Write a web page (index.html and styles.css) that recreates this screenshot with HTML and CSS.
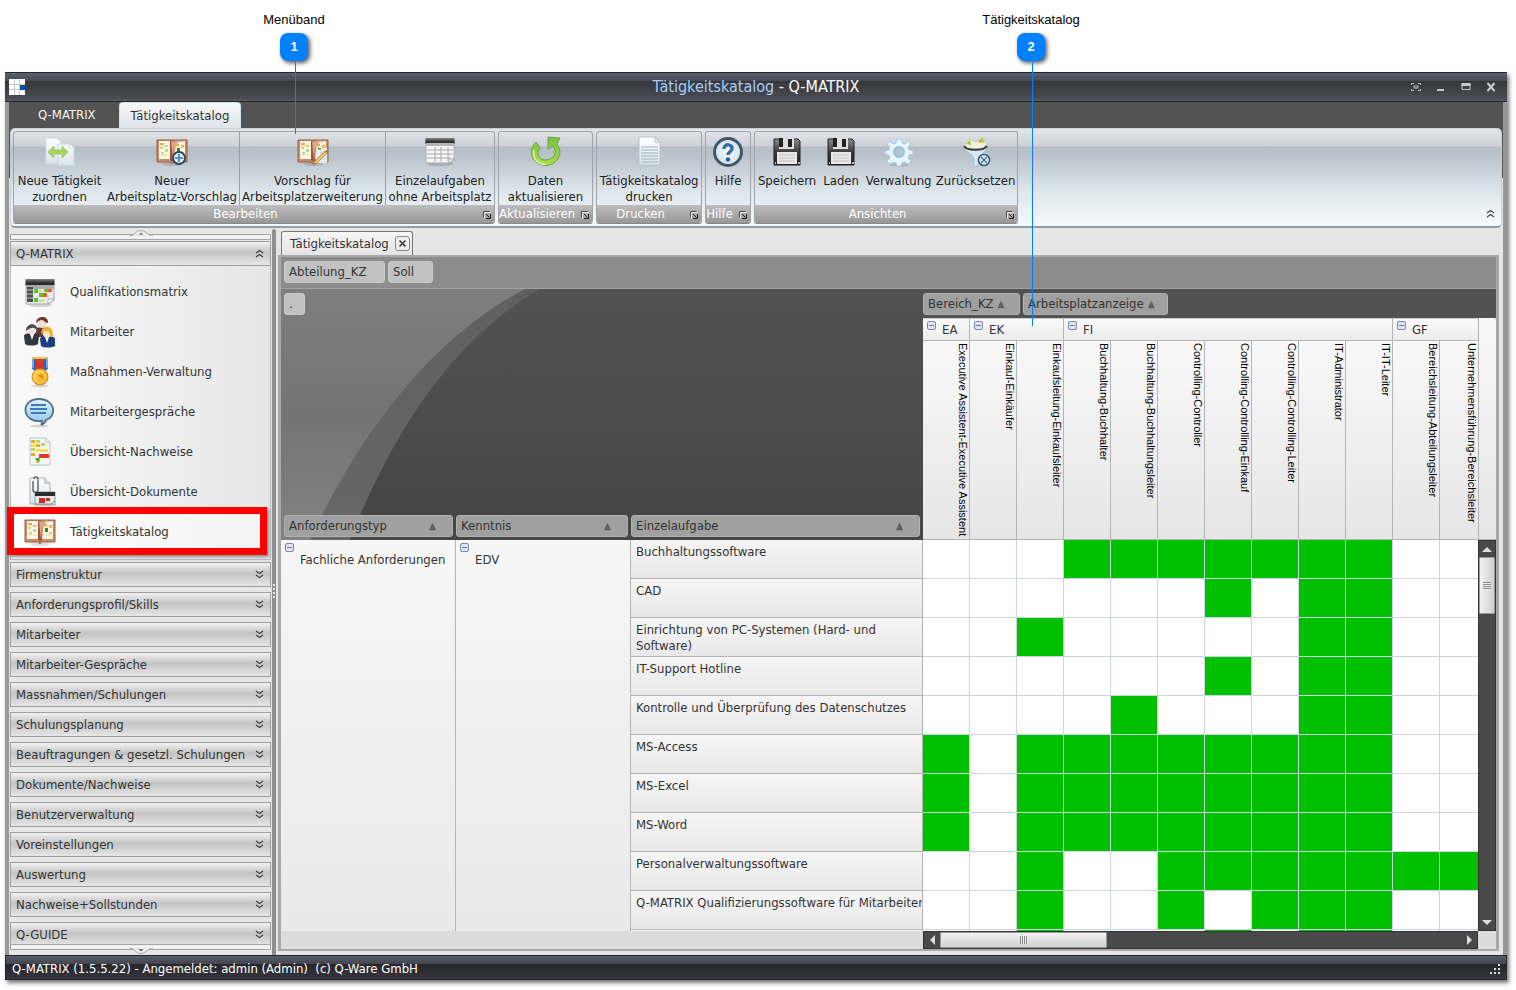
FILE: index.html
```html
<!DOCTYPE html>
<html lang="de">
<head>
<meta charset="utf-8">
<title>Tätigkeitskatalog - Q-MATRIX</title>
<link rel="stylesheet" href="styles.css">
</head>
<body>
<svg class="defs" width="0" height="0" aria-hidden="true">
  <defs>
    <linearGradient id="gDark" x1="0" y1="0" x2="0" y2="1"><stop offset="0" stop-color="#8a8a8a"/><stop offset=".5" stop-color="#3c3c3c"/><stop offset="1" stop-color="#222"/></linearGradient>
    <linearGradient id="gPaper" x1="0" y1="0" x2="0" y2="1"><stop offset="0" stop-color="#fff"/><stop offset="1" stop-color="#d7e3ea"/></linearGradient>
    <linearGradient id="gGreen" x1="0" y1="0" x2="0" y2="1"><stop offset="0" stop-color="#7cc142"/><stop offset="1" stop-color="#a9dc4a"/></linearGradient>
    <linearGradient id="gGold" x1="0" y1="0" x2="1" y2="1"><stop offset="0" stop-color="#ffdf5c"/><stop offset="1" stop-color="#ee9a12"/></linearGradient>
    <linearGradient id="gBubble" x1="0" y1="0" x2="0" y2="1"><stop offset="0" stop-color="#e4f3fb"/><stop offset="1" stop-color="#8cc4ea"/></linearGradient>
    <linearGradient id="gArc" x1="0" y1="0" x2="0" y2="1"><stop offset="0" stop-color="#7e7e7e"/><stop offset=".5" stop-color="#747474"/><stop offset="1" stop-color="#828282"/></linearGradient>
    <linearGradient id="gBand" x1="0" y1="0" x2="0" y2="1"><stop offset="0" stop-color="#606060"/><stop offset="1" stop-color="#676767"/></linearGradient>
    <radialGradient id="gHelp"><stop offset="0" stop-color="#fff"/><stop offset="1" stop-color="#cfdde6"/></radialGradient>

    <symbol id="book" viewBox="0 0 32 32">
      <ellipse cx="16" cy="28" rx="10" ry="2" fill="#000" opacity=".12"/>
      <path d="M1 4h30v22H18l-2 2-2-2H1z" fill="#c98c69" stroke="#9a6142"/>
      <path d="M3 5h11v18H3z" fill="#fbf8e6"/><path d="M18 23l2-17 9-1v18z" fill="#fbf4dc"/>
      <path d="M14 5l4 1v18l-2 2-2-2z" fill="#9b5536"/><path d="M15 6l9-2-6 8-1 12z" fill="#d8a88a"/>
      <path d="M4 7h4v2H4zM9 9h3v2H9zM20 8h3v2h-3z" fill="#e9a64a"/>
      <path d="M4 11h3v2H4zM9 13h3v3H9zM5 16h3v2H5zM21 13h3v3h-3zM25 16h3v2h-3z" fill="#c3d890"/>
      <path d="M21 12h3v4h-3z" fill="#2f8a2a"/><path d="M25 9h3v3h-3z" fill="#e9a64a"/>
      <path d="M3 19h10M20 19h9M3 10h10M20 11h9" stroke="#e4dcae"/>
    </symbol>
    <symbol id="bookAdd" viewBox="0 0 32 32"><use href="#book" width="32" height="32"/>
      <circle cx="23" cy="22" r="6" fill="#e8f1f7" stroke="#2c4a60" stroke-width="2"/><path d="M23 18v8M19 22h8" stroke="#5b8fc4" stroke-width="2"/></symbol>
    <symbol id="bookEdit" viewBox="0 0 32 32"><use href="#book" width="32" height="32"/>
      <path d="M20 14l10-2v15H19z" fill="#eef3f6" stroke="#c0cbd2" stroke-width=".5"/><path d="M21 17h8M21 20h8M21 23h8M24 14v12M27 14v12" stroke="#c5d2dc" stroke-width=".7"/>
      <path d="M17 29l1-4 10-10 2 2-10 10z" fill="#f4c25c" stroke="#a8763a" stroke-width=".7"/><path d="M28 15l2-1 1 1-1 2z" fill="#e05a3a"/></symbol>
    <symbol id="assign" viewBox="0 0 32 32">
      <path d="M2 2h11l4 4v22H2z" fill="url(#gPaper)" stroke="#cddbe3"/><path d="M14 8h11l5 4v18H14z" fill="url(#gPaper)" stroke="#c3d6e0"/>
      <path d="M25 8v4h5" fill="#fff" stroke="#b9cdd8" stroke-width=".7"/>
      <path d="M4 16l6-6v4h8v-4l6 6-6 6v-4h-8v4z" fill="#a6d65e" stroke="#8cc152" stroke-width=".7"/></symbol>
    <symbol id="tasks" viewBox="0 0 32 32">
      <ellipse cx="16" cy="28" rx="13" ry="2" fill="#000" opacity=".14"/>
      <path d="M2 3h28v21l-4 3H2z" fill="#f6f6f6" stroke="#b0b0b0"/><path d="M1.500 2h29v6h-29z" fill="url(#gDark)"/><path d="M2 7h28v3H2z" fill="#b5b5b5"/>
      <path d="M3 14h26M3 18h26M3 22h24M11 11v15M17 11v15M24 11v14" stroke="#aaa"/><path d="M25 27v-4h5z" fill="#fff" stroke="#999" stroke-width=".7"/></symbol>
    <symbol id="refresh" viewBox="0 0 32 32">
      <path d="M6 6C0 12 0 20 5 25c6 6 16 6 21 0 5-5 5-12 1-17l3-6-12-1 0 12 5-3c4 4 3 13-7 14C8 24 6 17 10 12z" fill="url(#gGreen)" stroke="#5e9a32" stroke-width=".8"/>
      <path d="M4 14c-2 9 5 15 12 14" stroke="#e0f5b0" stroke-width="1.500" fill="none"/></symbol>
    <symbol id="doc" viewBox="0 0 32 32">
      <path d="M6 1h16l5 5v23H6z" fill="url(#gPaper)" stroke="#b9c2c8"/><path d="M22 1v5h5z" fill="#eee" stroke="#a8a8a8" stroke-width=".7"/>
      <path d="M8 11h17M8 14h17M8 17h17M8 20h17M8 23h17M8 26h17" stroke="#9fb0bc"/></symbol>
    <symbol id="help" viewBox="0 0 32 32">
      <circle cx="16" cy="16" r="13.500" fill="url(#gHelp)" stroke="#41586a" stroke-width="3"/>
      <path d="M12 13c0-6 9-5 8 0-1 3-4 3-4 6" fill="none" stroke="#3470a8" stroke-width="3.500"/><circle cx="16" cy="23.500" r="2.200" fill="#2d5f96"/></symbol>
    <symbol id="disk" viewBox="0 0 32 32">
      <path d="M3 3h24l2 2v24H3z" fill="url(#gDark)" stroke="#222"/><path d="M8 2h15v11H8z" fill="#dedede"/><path d="M8 2h4v9H8zM17 3h4v8h-4z" fill="#222"/>
      <path d="M6 16h20v12H6z" fill="#e8e8e8"/><path d="M8 19h16M8 22h16M8 25h16" stroke="#c2c2c2"/><path d="M4 27h1M27 27h2" stroke="#bbb" stroke-width="2"/></symbol>
    <symbol id="gear" viewBox="0 0 32 32">
      <ellipse cx="16" cy="29" rx="10" ry="1.500" fill="#000" opacity=".12"/>
      <path d="M14 3h4l1 4 3 1 3-3 3 3-3 3 1 3 4 1v3l-4 1-1 3 3 3-3 3-3-2-3 1-1 3h-4l-1-3-3-1-3 2-3-3 3-3-1-3-4-1v-3l4-1 1-3-3-3 3-3 3 3 3-1z" fill="#e9f5fd" stroke="#a3cbe6"/>
      <circle cx="16" cy="16" r="5" fill="#b8c4cf" stroke="#8fc2e4" stroke-width="2"/></symbol>
    <symbol id="funnel" viewBox="0 0 32 32">
      <path d="M4 9l5-6 7 3 6-5 5 7-5 5H8z" fill="#f0f2dc" stroke="#b8c79a" stroke-width=".7"/><path d="M6 8l4-4 1 5zM18 5l4-3 3 5z" fill="#9bc63e"/><path d="M18 6l3-2v3z" fill="#f0a030"/>
      <path d="M4 11c3 4 19 4 23 0-2 7-8 8-9 13v6l-4 1V22C13 18 6 17 4 11z" fill="#d5e9f3" stroke="#8fb4ca" stroke-width=".7"/>
      <path d="M4 10c3 5 20 5 23 0" stroke="#3a3f42" stroke-width="2" fill="none"/>
      <circle cx="24" cy="24" r="5.500" fill="#e9f1f7" stroke="#3a5a78" stroke-width="1.600"/><path d="M21 21l6 6M27 21l-6 6" stroke="#3f76b5" stroke-width="1.500"/></symbol>
    <symbol id="qmatrix" viewBox="0 0 32 32">
      <ellipse cx="16" cy="29" rx="12" ry="2" fill="#000" opacity=".14"/>
      <path d="M2 4h28v20l-5 4H2z" fill="#ececec" stroke="#aaa"/><path d="M1.500 3h29v6h-29z" fill="url(#gDark)"/><path d="M2 9h28v4H2z" fill="#aaa"/>
      <path d="M3 11h6v15H3z" fill="#4c5050"/><path d="M3 14h6M3 18h6M3 22h6" stroke="#c0c0c0"/>
      <path d="M10 13h4v4h-4zM15 17h5v4h-5zM10 22h4v4h-4zM20 13h4v3h-4z" fill="#5fbf35"/><path d="M19 17h4v4h-4zM24 13h4v3h-4z" fill="#f05a28"/><path d="M14 14h4v3h-4zM15 23h6v3h-6z" fill="#c7e8a8"/>
      <path d="M24 28v-5h6z" fill="#fff" stroke="#999" stroke-width=".7"/></symbol>
    <symbol id="people" viewBox="0 0 32 32">
      <path d="M11 15c0-5 12-5 15 0v6H11z" fill="#603a34"/><circle cx="18" cy="7" r="5" fill="#f2dfcf"/><path d="M12 7c0-8 13-8 12 0-3 0-4-3-6-3s-4 1-6 3z" fill="#6b3a30"/>
      <path d="M0 20c0-4 15-4 15 0l-1 8c-3 2-10 2-13 0z" fill="#33373b"/><circle cx="8" cy="14" r="4.500" fill="#efe3da"/><path d="M2 15c0-9 12-9 12 0-2-1-3-4-6-3-3 0-4 2-6 3z" fill="#4d4d4d"/><path d="M6 18l2 6 2-6z" fill="#fff"/>
      <path d="M16 23c0-4 15-4 15 0v7c-4 2-11 2-14 0z" fill="#173f7d"/><circle cx="23" cy="17" r="4.500" fill="#f8e2bd"/><path d="M17 18c0-10 13-10 12 2l-3 1c1-4-1-6-4-6-2 0-4 1-5 3z" fill="#eead3b"/><path d="M21 21l2 6 2-6z" fill="#fff"/></symbol>
    <symbol id="medal" viewBox="0 0 32 32">
      <ellipse cx="16" cy="30" rx="9" ry="1.500" fill="#000" opacity=".14"/>
      <path d="M8 1h16v12l-8 5-8-5z" fill="#2f64b4"/><path d="M12 1h8v14h-8z" fill="#d33a2c"/><path d="M8 1h16v2H8z" fill="#e8c350"/>
      <path d="M8 3h2v10l-2-2zM22 3h2v8l-2 2z" fill="#7aa8dc"/><path d="M12 13h8l1 3H11z" fill="#f3bd30"/>
      <circle cx="16" cy="21" r="8" fill="url(#gGold)" stroke="#d88b14"/><circle cx="16" cy="21" r="5.500" fill="none" stroke="#fbe27d"/><path d="M12 18l8 6-2-6-3 1z" fill="#e08d18"/></symbol>
    <symbol id="talk" viewBox="0 0 32 32">
      <ellipse cx="15" cy="30" rx="10" ry="1.500" fill="#000" opacity=".14"/>
      <path d="M15 3c17 0 18 18 7 21-1 3-2 4-5 5 1-1 1-3 1-4C-3 27-4 3 15 3z" fill="url(#gBubble)" stroke="#4d6f88" stroke-width="1.800"/>
      <path d="M7 9h15M6 13h17M7 17h15" stroke="#3f78b6" stroke-width="1.800"/></symbol>
    <symbol id="proof" viewBox="0 0 32 32">
      <path d="M6 2h16l4 4v23H6z" fill="#f4f7f3" stroke="#b9c5ca"/><path d="M7 4h4v3H7zM12 8h4v3h-4zM7 17h4v3H7z" fill="#f6a623"/>
      <path d="M12 4h4v3h-4zM17 7h4v3h-4zM7 12h4v3H7zM12 23h4v4h-4z" fill="#b7d96a"/><path d="M7 8h4v3H7zM12 13h12v3H12z" fill="#f5dd60"/><path d="M15 18h10v4H15z" fill="#e23a25"/><path d="M11 22l3 4 2-4z" fill="#4b9a2c"/><path d="M22 2v4h4" fill="#fff" stroke="#a7b5ba"/></symbol>
    <symbol id="docs" viewBox="0 0 32 32">
      <path d="M6 2h15l5 5v21H6z" fill="url(#gPaper)" stroke="#a9b2b8"/><path d="M21 2v5h5" fill="#eee" stroke="#999"/>
      <path d="M9 5v9c0 3 5 3 5 0V3c0-3-4-3-4 0" fill="none" stroke="#444" stroke-width="1.200"/>
      <path d="M11 16h20v13H11z" fill="#e9e9e9" stroke="#999"/><path d="M11 16h20v4H11z" fill="#2e2e2e"/><path d="M15 22h6v5h-6zM22 22h4v3h-4z" fill="#d32626"/><path d="M11 28h16l4-3" stroke="#888" fill="none"/></symbol>
    <symbol id="chevDown" viewBox="0 0 9 9"><path d="M1 1l3.500 2.500L8 1M1 5l3.500 2.500L8 5" fill="none" stroke="#444" stroke-width="1.300"/></symbol>
    <symbol id="chevUp" viewBox="0 0 9 9"><path d="M1 4l3.500-2.500L8 4M1 8l3.500-2.500L8 8" fill="none" stroke="#444" stroke-width="1.300"/></symbol>
    <symbol id="launch" viewBox="0 0 8 8"><path d="M1.500 7.500v-6h6" fill="none" stroke="#eee"/><path d="M.5 6.500V.5h6" fill="none" stroke="#444"/><path d="M3 3l3.500 3.500M7.500 3v4.500H3" stroke="#222" fill="none"/></symbol>
  </defs>
</svg>

<main class="window">
  <header class="titlebar">
    <svg class="logo" viewBox="0 0 16 16" shape-rendering="crispEdges"><path d="M0 0h16v16H0z" fill="#fff"/><path d="M11 5h5v6h-5z" fill="#0d4ea6"/><path d="M5.500 0v16M10.500 0v16M0 5.500h16M0 10.500h11" stroke="#c8c8c8"/></svg>
    <h1><span>Tätigkeitskatalog</span> - Q-MATRIX</h1>
    <div class="winbuttons">
      <button type="button" aria-label="Vollbild"><svg viewBox="0 0 10 10"><path d="M.5 3V1.500H3M7 1.500h2.500V3M.5 7v1.500H3M7 8.500h2.500V7M3 4h4v2H3z" fill="none" stroke="#b4bcc6"/></svg></button>
      <button type="button" aria-label="Minimieren"><svg viewBox="0 0 10 10"><path d="M1 7h7v2H1z" fill="#c0c8d0"/></svg></button>
      <button type="button" aria-label="Maximieren"><svg viewBox="0 0 10 10"><path d="M1 2.500h8v5H1z" fill="none" stroke="#c0c8d0"/><path d="M.5 1h9v3h-9z" fill="#c0c8d0"/></svg></button>
      <button type="button" aria-label="Schließen"><svg viewBox="0 0 10 10"><path d="M1.500 1l7 8M8.500 1l-7 8" stroke="#c6ced6" stroke-width="2"/></svg></button>
    </div>
  </header>

  <nav class="ribbontabs">
    <button type="button">Q-MATRIX</button>
    <button type="button" class="active">Tätigkeitskatalog</button>
  </nav>

  <section class="ribbonwrap">
    <div class="ribbon">
      <div class="group">
        <div class="tools">
          <button type="button" class="w92"><svg><use href="#assign"/></svg>Neue Tätigkeit<br>zuordnen</button>
          <button type="button" class="w134"><svg><use href="#bookAdd"/></svg>Neuer<br>Arbeitsplatz-Vorschlag</button>
          <button type="button" class="w146 sep"><svg><use href="#bookEdit"/></svg>Vorschlag für<br>Arbeitsplatzerweiterung</button>
          <button type="button" class="w109 sep"><svg><use href="#tasks"/></svg>Einzelaufgaben<br>ohne Arbeitsplatz</button>
        </div>
        <div class="caption"><span>Bearbeiten</span><svg><use href="#launch"/></svg></div>
      </div>
      <div class="group">
        <div class="tools"><button type="button" class="w93"><svg><use href="#refresh"/></svg>Daten<br>aktualisieren</button></div>
        <div class="caption"><span>Aktualisieren</span><svg><use href="#launch"/></svg></div>
      </div>
      <div class="group">
        <div class="tools"><button type="button" class="w104"><svg><use href="#doc"/></svg>Tätigkeitskatalog<br>drucken</button></div>
        <div class="caption"><span>Drucken</span><svg><use href="#launch"/></svg></div>
      </div>
      <div class="group">
        <div class="tools"><button type="button" class="w44"><svg><use href="#help"/></svg>Hilfe</button></div>
        <div class="caption"><span>Hilfe</span><svg><use href="#launch"/></svg></div>
      </div>
      <div class="group">
        <div class="tools">
          <button type="button" class="w64"><svg><use href="#disk"/></svg>Speichern</button>
          <button type="button" class="w44"><svg><use href="#disk"/></svg>Laden</button>
          <button type="button" class="w71"><svg><use href="#gear"/></svg>Verwaltung</button>
          <button type="button" class="w83"><svg><use href="#funnel"/></svg>Zurücksetzen</button>
        </div>
        <div class="caption"><span>Ansichten</span><svg><use href="#launch"/></svg></div>
      </div>
      <button type="button" class="collapse" aria-label="Menüband minimieren"><svg><use href="#chevUp"/></svg></button>
    </div>
  </section>

  <div class="body">
    <aside class="sidebar">
      <div class="scrollstrip up"><svg viewBox="0 0 24 6"><path d="M0 6c6 0 6-5.500 12-5.500S18 6 24 6" fill="#eee" stroke="#aaa"/><path d="M9.500 5L12 2.500 14.500 5z" fill="#888"/></svg></div>
      <button type="button" class="section open"><span>Q-MATRIX</span><svg><use href="#chevUp"/></svg></button>
      <ul class="items">
        <li><a href="#"><svg><use href="#qmatrix"/></svg>Qualifikationsmatrix</a></li>
        <li><a href="#"><svg><use href="#people"/></svg>Mitarbeiter</a></li>
        <li><a href="#"><svg><use href="#medal"/></svg>Maßnahmen-Verwaltung</a></li>
        <li><a href="#"><svg><use href="#talk"/></svg>Mitarbeitergespräche</a></li>
        <li><a href="#"><svg><use href="#proof"/></svg>Übersicht-Nachweise</a></li>
        <li><a href="#"><svg><use href="#docs"/></svg>Übersicht-Dokumente</a></li>
        <li class="selected"><a href="#"><svg><use href="#book"/></svg>Tätigkeitskatalog</a></li>
      </ul>
      <div class="sections">
        <button type="button" class="section"><span>Firmenstruktur</span><svg><use href="#chevDown"/></svg></button>
        <button type="button" class="section"><span>Anforderungsprofil/Skills</span><svg><use href="#chevDown"/></svg></button>
        <button type="button" class="section"><span>Mitarbeiter</span><svg><use href="#chevDown"/></svg></button>
        <button type="button" class="section"><span>Mitarbeiter-Gespräche</span><svg><use href="#chevDown"/></svg></button>
        <button type="button" class="section"><span>Massnahmen/Schulungen</span><svg><use href="#chevDown"/></svg></button>
        <button type="button" class="section"><span>Schulungsplanung</span><svg><use href="#chevDown"/></svg></button>
        <button type="button" class="section"><span>Beauftragungen &amp; gesetzl. Schulungen</span><svg><use href="#chevDown"/></svg></button>
        <button type="button" class="section"><span>Dokumente/Nachweise</span><svg><use href="#chevDown"/></svg></button>
        <button type="button" class="section"><span>Benutzerverwaltung</span><svg><use href="#chevDown"/></svg></button>
        <button type="button" class="section"><span>Voreinstellungen</span><svg><use href="#chevDown"/></svg></button>
        <button type="button" class="section"><span>Auswertung</span><svg><use href="#chevDown"/></svg></button>
        <button type="button" class="section"><span>Nachweise+Sollstunden</span><svg><use href="#chevDown"/></svg></button>
        <button type="button" class="section"><span>Q-GUIDE</span><svg><use href="#chevDown"/></svg></button>
      </div>
      <div class="scrollstrip down"><svg viewBox="0 0 24 6"><path d="M0 0c6 0 6 5.500 12 5.500S18 0 24 0" fill="#eee" stroke="#aaa"/><path d="M9.500 1L12 3.500 14.500 1z" fill="#666"/></svg></div>
    </aside>
    <div class="splitter"></div>

    <section class="content">
      <div class="doctabs"><div class="doctab">Tätigkeitskatalog<button type="button" aria-label="Schließen"><svg viewBox="0 0 9 9"><path d="M1.500 1.500l6 6M7.500 1.500l-6 6" stroke="#333" stroke-width="1.500"/></svg></button></div></div>
      <div class="pivot">
        <div class="filters"><button type="button" class="chip light w101">Abteilung_KZ</button><button type="button" class="chip light w45">Soll</button></div>
        <div class="corner">
          <svg class="arc" viewBox="0 0 642 251"><path d="M0 0h259C175 48 112 140 69 251H0z" fill="url(#gBand)"/><path d="M0 0h244C155 46 80 140 29 251H0z" fill="url(#gArc)"/></svg>
          <div class="chips"><button type="button" class="chip light w21">.</button></div>
          <div class="chips rowfields">
            <button type="button" class="chip w169"><span>Anforderungstyp</span><i>▲</i></button>
            <button type="button" class="chip w172"><span>Kenntnis</span><i>▲</i></button>
            <button type="button" class="chip w289"><span>Einzelaufgabe</span><i>▲</i></button>
          </div>
        </div>
        <div class="colhead">
          <div class="chips"><button type="button" class="chip w97">Bereich_KZ<i>▲</i></button><button type="button" class="chip w145">Arbeitsplatzanzeige<i>▲</i></button></div>
        </div>
        <div class="rowlabels">
          <table>
            <colgroup><col class="c1"><col class="c2"><col class="c3"></colgroup>
            <tbody>
            <tr><th rowspan="11" class="grp"><b class="minus"></b><span>Fachliche Anforderungen</span></th><th rowspan="11" class="grp"><b class="minus"></b><span>EDV</span></th><th>Buchhaltungssoftware</th></tr>
            <tr><th>CAD</th></tr>
            <tr><th>Einrichtung von PC-Systemen (Hard- und Software)</th></tr>
            <tr><th>IT-Support Hotline</th></tr>
            <tr><th>Kontrolle und Überprüfung des Datenschutzes</th></tr>
            <tr><th>MS-Access</th></tr>
            <tr><th>MS-Excel</th></tr>
            <tr><th>MS-Word</th></tr>
            <tr><th>Personalverwaltungssoftware</th></tr>
            <tr><th class="long">Q-MATRIX Qualifizierungssoftware für Mitarbeiter</th></tr>
            <tr><th></th></tr>
            </tbody>
          </table>
        </div>
        <div class="matrix">
          <table>
            <thead>
            <tr class="areas"><th><b class="minus"></b>EA</th><th colspan="2"><b class="minus"></b>EK</th><th colspan="7"><b class="minus"></b>FI</th><th colspan="2" class="gf"><b class="minus"></b>GF</th></tr>
            <tr class="jobs"><th><div>Executive Assistent-Executive Assistent</div></th><th><div>Einkauf-Einkäufer</div></th><th><div>Einkaufsleitung-Einkaufsleiter</div></th><th><div>Buchhaltung-Buchhalter</div></th><th><div>Buchhaltung-Buchhaltungsleiter</div></th><th><div>Controlling-Controller</div></th><th><div>Controlling-Controlling-Einkauf</div></th><th><div>Controlling-Controlling-Leiter</div></th><th><div>IT-Administrator</div></th><th><div>IT-IT-Leiter</div></th><th><div>Bereichsleitung-Abteilungsleiter</div></th><th class="cut"><div>Unternehmensführung-Bereichsleiter</div></th></tr>
            </thead>
            <tbody>
            <tr><td><td><td><td class="on"><td class="on"><td class="on"><td class="on"><td class="on"><td class="on"><td class="on"><td><td></tr>
            <tr><td><td><td><td><td><td><td class="on"><td><td class="on"><td class="on"><td><td></tr>
            <tr><td><td><td class="on"><td><td><td><td><td><td class="on"><td class="on"><td><td></tr>
            <tr><td><td><td><td><td><td><td class="on"><td><td class="on"><td class="on"><td><td></tr>
            <tr><td><td><td><td><td class="on"><td><td><td><td class="on"><td class="on"><td><td></tr>
            <tr><td class="on"><td><td class="on"><td class="on"><td class="on"><td class="on"><td class="on"><td class="on"><td class="on"><td class="on"><td><td></tr>
            <tr><td class="on"><td><td class="on"><td class="on"><td class="on"><td class="on"><td class="on"><td class="on"><td class="on"><td class="on"><td><td></tr>
            <tr><td class="on"><td><td class="on"><td class="on"><td class="on"><td class="on"><td class="on"><td class="on"><td class="on"><td class="on"><td><td></tr>
            <tr><td><td><td class="on"><td><td><td class="on"><td class="on"><td class="on"><td class="on"><td class="on"><td class="on"><td class="on"></tr>
            <tr><td><td><td class="on"><td><td><td class="on"><td><td class="on"><td class="on"><td class="on"><td><td></tr>
            <tr><td><td><td class="on"><td><td><td><td class="on"><td><td class="on"><td class="on"><td><td></tr>
            </tbody>
          </table>
        </div>
        <div class="headfill"></div>
        <div class="vscroll"><button type="button" aria-label="Nach oben" class="up"></button><div class="thumb"></div><button type="button" aria-label="Nach unten" class="down"></button></div>
        <div class="hscroll"><button type="button" aria-label="Nach links" class="left"></button><div class="thumb"></div><button type="button" aria-label="Nach rechts" class="right"></button></div>
      </div>
    </section>
  </div>

  <footer class="status"><span>Q-MATRIX (1.5.5.22) - Angemeldet: admin (Admin)&nbsp; (c) Q-Ware GmbH</span>
    <svg viewBox="0 0 12 12" shape-rendering="crispEdges"><path d="M9 1h2v2H9zM5 5h2v2H5zM9 5h2v2H9zM1 9h2v2H1zM5 9h2v2H5zM9 9h2v2H9z" fill="#d8d8d8"/></svg></footer>
</main>

<div class="callout first"><span>Menüband</span><b>1</b><i></i></div>
<div class="callout second"><span>Tätigkeitskatalog</span><b>2</b><i></i></div>
</body>
</html>
```

FILE: styles.css
```css
* { box-sizing: border-box; }
body {
  margin: 0;
  height: 100vh;
  padding: 72px 9px 10px 5px;
  display: flex;
  background: #fff;
  color: #333;
  font: 13px/16px "DejaVu Sans Condensed", "DejaVu Sans", "Noto Sans", sans-serif;
}
button {
  margin: 0;
  padding: 0;
  border: 0;
  background: none;
  color: inherit;
  font: inherit;
  white-space: nowrap;
}
a { color: inherit; text-decoration: none; }
ul { list-style: none; margin: 0; padding: 0; }
i, th { font-style: normal; font-weight: normal; }
.defs { position: absolute; }

.window {
  flex: 1;
  min-width: 0;
  display: flex;
  flex-direction: column;
  background: #e6e6e6;
  box-shadow: 2px 3px 4px #777;
}

/* Title bar */
.titlebar {
  height: 30px;
  flex: none;
  display: flex;
  align-items: center;
  padding: 0 11px 0 4px;
  border-top: 1px solid #23262c;
  border-bottom: 1px solid #1f2228;
  background: linear-gradient(#5c606a 0, #464a55 8px, #36373b 8px, #4b4c53 26px, #5a5d68 28px);
}
.logo { width: 16px; height: 16px; }
.titlebar h1 {
  flex: 1;
  margin: 0;
  padding-left: 76px;
  text-align: center;
  font-size: 16px;
  font-weight: normal;
  color: #fff;
}
.titlebar h1 span { color: #a5cdf8; }
.winbuttons { display: flex; gap: 15px; }
.winbuttons button { width: 10px; height: 10px; display: flex; }
.winbuttons svg { width: 10px; height: 10px; }

/* Ribbon */
.ribbontabs {
  height: 26px;
  flex: none;
  display: flex;
  padding-left: 17px;
  background: #535353;
  border-left: 4px solid #98989b;
  border-right: 4px solid #98989b;
}
.ribbontabs button { color: #f4f4f4; padding: 0 23px 0 12px; }
.ribbontabs .active {
  padding: 0 11px;
  min-width: 122px;
  border: 1px solid #d2e2ea;
  border-bottom: 0;
  border-radius: 4px 4px 0 0;
  background: linear-gradient(#f6f7f8, #dfe3e8);
  color: #333;
}
.ribbonwrap {
  flex: none;
  border-left: 4px solid #98989b;
  border-right: 4px solid #98989b;
  background: linear-gradient(#535353 50%, #e6e6e6 50%);
}
.ribbon {
  height: 100px;
  display: flex;
  gap: 3px;
  margin: 0 1px;
  padding: 2px;
  border: 1px solid #c5d0d8;
  border-bottom: 2px solid #979ca4;
  border-radius: 5px;
  background: linear-gradient(#e3e6e9 0, #cdd0d7 17px, #b4bcc6 18px, #bdc5ce 30px, #dde6ec 62px, #f4fafd 97px);
}
.group {
  height: 93px;
  display: flex;
  flex-direction: column;
  border: 1px solid #a0a5ac;
  border-bottom-color: #888;
  border-radius: 3px;
  overflow: hidden;
}
.tools { flex: 1; display: flex; }
.tools button {
  padding-top: 4px;
  text-align: center;
  align-self: flex-start;
  color: #222;
}
.tools svg { display: block; width: 32px; height: 32px; margin: 0 auto 5px; }
.tools .sep { border-left: 1px solid #9aa0a8; }
.w92 { width: 91px; } .w134 { width: 134px; } .w146 { width: 146px; } .w109 { width: 109px; }
.w93 { width: 93px; } .w104 { width: 104px; } .w44 { width: 44px; } .w64 { width: 64px; }
.w71 { width: 71px; } .w83 { width: 83px; }
.caption {
  height: 18px;
  display: flex;
  align-items: center;
  background: linear-gradient(#bdbdbd, #979797);
  color: #fff;
}
.caption span { flex: 1; text-align: center; white-space: nowrap; }
.caption svg { width: 8px; height: 8px; margin: 2px 3px 0 6px; }
.collapse { margin: auto 4px 2px auto; }
.collapse svg { display: block; width: 9px; height: 9px; margin-bottom: 4px; }

/* Body */
.body {
  flex: 1;
  min-height: 0;
  display: flex;
  border-left: 4px solid #98989b;
  border-right: 4px solid #98989b;
  padding-top: 1px;
}
.sidebar {
  width: 262px;
  flex: none;
  padding: 5px 0 5px 1px;
  display: flex;
  flex-direction: column;
}
.scrollstrip {
  height: 6px;
  flex: none;
  border: 1px solid #a5a5a5;
  background: #f2f2f2;
  display: flex;
  justify-content: center;
}
.scrollstrip svg { width: 24px; height: 6px; flex: none; }
.scrollstrip.up svg { margin-top: -5px; }
.scrollstrip.down svg { margin-top: 3px; }
.section {
  height: 25px;
  flex: none;
  display: flex;
  align-items: center;
  justify-content: space-between;
  padding: 0 6px 0 5px;
  border: 1px solid #9e9e9e;
  background: linear-gradient(#f2f2f2, #c4c4c4 45%, #e6e6e6);
  text-align: left;
}
.section svg { width: 9px; height: 9px; }
.section.open { margin-top: 1px; }
.items {
  flex: none;
  height: 294px;
  padding-top: 6px;
  border: 1px solid #bbb;
  border-top: 0;
  background: linear-gradient(90deg, #fafafa, #e6e6e6);
}
.items a { height: 40px; display: flex; align-items: center; gap: 14px; padding-left: 13px; }
.items svg { width: 32px; height: 32px; }
.items .selected { position: relative; }
.items .selected a { background: linear-gradient(90deg, #fff, #f2f2f2); }
.items .selected::after {
  content: "";
  position: absolute;
  inset: -5px 3px -3px -4px;
  border: 7px solid #f00;
  box-shadow: 2px 2px 3px #888;
}
.sections {
  flex: 1;
  min-height: 0;
  overflow: hidden;
  display: flex;
  flex-direction: column;
  gap: 5px;
  padding-top: 2px;
}
.splitter {
  width: 4px;
  flex: none;
  background: #8e8e8e;
  border-radius: 2px 2px 0 0;
  margin-left: 1px;
  display: flex;
  align-items: center;
}
.splitter::after {
  content: "";
  width: 2px;
  height: 16px;
  margin-left: 1px;
  background: repeating-linear-gradient(#e6e6e6 0 2px, #8e8e8e 2px 4px);
}
.content {
  flex: 1;
  min-width: 0;
  display: flex;
  flex-direction: column;
  padding: 2px 4px 4px 2px;
}
.doctabs { height: 24px; flex: none; padding-left: 3px; display: flex; }
.doctab {
  display: flex;
  align-items: center;
  justify-content: space-between;
  width: 132px;
  padding: 0 2px 0 8px;
  border: 1px solid #777;
  border-bottom: 0;
  border-radius: 3px 3px 0 0;
  background: linear-gradient(#f6f6f6, #e4e4e4);
}
.doctab button {
  width: 15px;
  height: 15px;
  display: grid;
  place-items: center;
  border: 1px solid #888;
  border-radius: 3px;
  background: #eee;
}
.doctab svg { width: 9px; height: 9px; }

/* Pivot grid */
.pivot {
  flex: 1;
  min-height: 0;
  display: grid;
  grid-template-columns: 642px 1fr 18px;
  grid-template-rows: 32px 29px 222px 1fr 18px;
  border: 2px solid #a9a9a9;
  border-width: 2px 3px;
  background: #dcdcdc;
}
.filters {
  grid-column: 1 / -1;
  display: flex;
  gap: 3px;
  padding: 4px 3px;
  background: #8c8c8c;
  border-bottom: 1px solid #a2a2a2;
}
.chip {
  height: 22px;
  display: flex;
  align-items: center;
  padding: 0 4px 1px;
  border: 1px solid #b0b0b0;
  border-radius: 3px;
  background: #a0a0a0;
  text-align: left;
}
.chip.light { background: #c1c1c1; border-color: #cacaca; }
.chip i { font-size: 10px; color: #606060; margin-left: 4px; }
.chip span { flex: 1; }
.w101 { width: 101px; } .w45 { width: 45px; } .w21 { width: 21px; }
.w169 { width: 169px; } .w172 { width: 172px; } .w289 { width: 289px; } .w97 { width: 97px; } .w145 { width: 145px; }
.chips { display: flex; gap: 3px; padding-left: 3px; position: relative; }
.rowfields i { margin-right: 12px; }
.corner {
  grid-row: 2 / 4;
  position: relative;
  display: flex;
  flex-direction: column;
  justify-content: space-between;
  padding: 4px 0 3px;
  background: linear-gradient(#525252, #454545);
}
.arc { position: absolute; left: 0; top: 0; width: 642px; height: 251px; }
.colhead { grid-column: 2 / 4; padding-top: 4px; background: #525252; }
.colhead .chips { padding-left: 0; }
.rowlabels { grid-row: 4; overflow: hidden; background: #f2f2f2; border-right: 1px solid #b4b4b4; }
table { border-collapse: separate; border-spacing: 0; table-layout: fixed; }
.rowlabels table { width: 642px; }
.c1 { width: 175px; } .c2 { width: 175px; }
.rowlabels th {
  height: 39px;
  padding: 4px 8px 2px 5px;
  text-align: left;
  vertical-align: top;
  border-right: 1px solid #b4b4b4;
  border-bottom: 1px solid #b4b4b4;
  background: linear-gradient(#f5f5f5, #e8e8e8);
}
.rowlabels .long { padding-right: 0; white-space: nowrap; }
.rowlabels .grp { padding: 3px 0 0 4px; background: linear-gradient(#f6f6f6, #e8e8e8); }
.minus {
  display: inline-block;
  width: 9px;
  height: 9px;
  margin-right: 6px;
  border: 1px solid #7b87a8;
  border-radius: 2px;
  background: linear-gradient(#6b789c, #6b789c) center / 5px 1px no-repeat, #dfe5f2;
}
.grp .minus { display: block; }
.grp span { display: block; padding-left: 15px; white-space: nowrap; }
.areas .minus { vertical-align: 4px; }
.matrix {
  grid-column: 2;
  grid-row: 3 / 5;
  overflow: hidden;
  background: #fff;
}
.matrix table { width: 564px; border-top-left-radius: 4px; }
.areas th {
  height: 23px;
  padding: 0 0 0 4px;
  text-align: left;
  border-right: 1px solid #b4b4b4;
  border-bottom: 1px solid #b4b4b4;
  border-top: 1px solid #ccc;
  background: linear-gradient(#fafafa, #ececec);
  white-space: nowrap;
}
.jobs th {
  height: 199px;
  padding: 0;
  vertical-align: top;
  text-align: left;
  border-right: 1px solid #b4b4b4;
  border-bottom: 1px solid #b4b4b4;
  background: linear-gradient(#f8f8f8, #e6e6e6);
}
.jobs div {
  width: 46px;
  height: 198px;
  padding: 2px 0 0;
  writing-mode: vertical-rl;
  white-space: nowrap;
  font: 11px/12px "Liberation Sans", Arial, sans-serif;
  color: #000;
}
.jobs .cut div { width: 38px; }
.matrix td { height: 39px; padding: 0; border-right: 1px solid #ccd6e0; border-bottom: 1px solid #ccd6e0; }
.matrix .on { background: #00c000; }
.headfill {
  grid-column: 3;
  grid-row: 3;
  background: linear-gradient(#f8f8f8, #e6e6e6);
  border-left: 1px solid #b4b4b4;
  border-bottom: 1px solid #b4b4b4;
  border-top-right-radius: 4px;
}
.vscroll, .hscroll { display: flex; background: #494949; border: 1px solid #333; }
.vscroll { grid-column: 3; grid-row: 4; flex-direction: column; }
.hscroll { grid-column: 2; grid-row: 5; }
.vscroll button, .hscroll button { width: 16px; height: 16px; display: grid; place-items: center; flex: none; }
.vscroll button::after, .hscroll button::after { content: ""; border: 5px solid transparent; }
.vscroll .up::after { border-bottom-color: #ddd; border-top: 0; }
.vscroll .down::after { border-top-color: #ddd; border-bottom: 0; }
.hscroll .left::after { border-right-color: #ddd; border-left: 0; }
.hscroll .right::after { border-left-color: #ddd; border-right: 0; }
.vscroll .down { margin-top: auto; }
.hscroll .right { margin-left: auto; }
.thumb { display: grid; place-items: center; border: 1px solid #999; border-radius: 1px; }
.vscroll .thumb { height: 57px; background: linear-gradient(90deg, #f2f2f2, #cfcfcf); }
.hscroll .thumb { width: 167px; background: linear-gradient(#f2f2f2, #cfcfcf); }
.thumb::after { content: ""; width: 8px; height: 8px; }
.vscroll .thumb::after { background: repeating-linear-gradient(#888 0 1px, #eee 1px 2px); }
.hscroll .thumb::after { background: repeating-linear-gradient(90deg, #888 0 1px, #eee 1px 2px); }

/* Status bar */
.status {
  height: 25px;
  flex: none;
  display: flex;
  align-items: center;
  justify-content: space-between;
  padding: 2px 5px 0 6px;
  border: 1px solid #23252b;
  background: linear-gradient(#5a5d68 0, #42454f 8px, #25262a 8px, #36373d);
  color: #fff;
}
.status span { white-space: nowrap; }
.status svg { width: 12px; height: 12px; }

/* Callouts that lie over the window */
.callout {
  position: absolute;
  top: 12px;
  width: 120px;
  display: flex;
  flex-direction: column;
  align-items: center;
  color: #000;
  font: 13px/16px "Liberation Sans", Arial, sans-serif;
}
.callout.first { left: 234px; }
.callout.second { left: 971px; }
.callout b {
  width: 28px;
  height: 28px;
  margin-top: 5px;
  border-radius: 8px;
  background: #0080ff;
  box-shadow: 2px 2px 4px #555;
  color: #fff;
  line-height: 28px;
  text-align: center;
}
.callout i { width: 1px; height: 73px; margin-left: 3px; background: #0080ff; }
.callout.second i { height: 265px; }
```
